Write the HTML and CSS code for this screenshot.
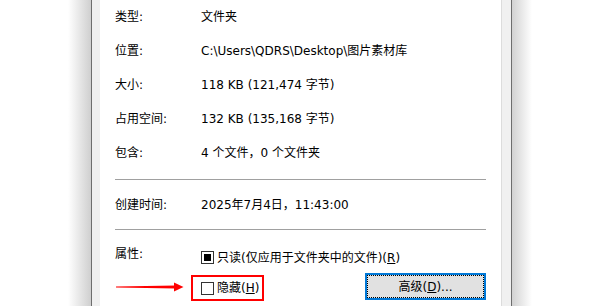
FILE: index.html
```html
<!DOCTYPE html>
<html lang="zh-CN">
<head>
<meta charset="utf-8">
<link rel="stylesheet" href="styles.css">
</head>
<body>
<div class="screen">
  <div class="shade-left"></div>
  <div class="edge"></div>
  <div class="frame frame-left"></div>
  <div class="panel">
    <div class="row"><div class="label">类型:</div><div class="value">文件夹</div></div>
    <div class="row"><div class="label">位置:</div><div class="value">C:\Users\QDRS\Desktop\图片素材库</div></div>
    <div class="row"><div class="label">大小:</div><div class="value">118 KB (121,474 字节)</div></div>
    <div class="row"><div class="label">占用空间:</div><div class="value">132 KB (135,168 字节)</div></div>
    <div class="row"><div class="label">包含:</div><div class="value">4 个文件，0 个文件夹</div></div>
    <div class="sep sep-first"></div>
    <div class="row row-tall"><div class="label">创建时间:</div><div class="value">2025年7月4日，11:43:00</div></div>
    <div class="sep"></div>
    <div class="attrs">
      <div class="label attr-label">属性:</div>
      <div class="check-row">
        <span class="box box-mixed"><span class="fill"></span></span><span class="check-text">只读(仅应用于文件夹中的文件)(<u>R</u>)</span>
      </div>
      <div class="arrow-cell">
        <svg class="arrow" width="68" height="10" viewBox="0 0 68 10">
          <polygon points="0,4.4 60,3.4 60,6.6 0,5.6" fill="#ff0000"/>
          <polygon points="58,0.6 67.5,5 58,9.4" fill="#ff0000"/>
        </svg>
      </div>
      <div class="bottom-row">
        <div class="highlight">
          <span class="box"></span><span class="check-text">隐藏(<u>H</u>)</span>
        </div>
        <button class="btn">高级(<u>D</u>)...</button>
      </div>
    </div>
  </div>
  <div class="frame-border"></div>
  <div class="frame frame-right"></div>
  <div class="edge"></div>
  <div class="shade-right"></div>
</div>
</body>
</html>
```

FILE: styles.css
```css
html, body {
  margin: 0;
  padding: 0;
  background: #ffffff;
}
body {
  width: 600px;
  height: 306px;
  overflow: hidden;
  font-family: "DejaVu Sans", "Noto Sans CJK SC", sans-serif;
  font-size: 12px;
  color: #000;
}
.screen {
  display: flex;
  height: 306px;
}
.shade-left {
  width: 91px;
  flex: none;
  background: linear-gradient(to right, #ffffff 0, #ffffff 68px, #cfcfcf 91px);
}
.edge {
  width: 1px;
  flex: none;
  background: #6e6e6e;
}
.frame {
  flex: none;
  background: #f0f0f0;
}
.frame-left { width: 8px; }
.frame-right { width: 9px; }
.frame-border {
  width: 1px;
  flex: none;
  background: #dcdcdc;
}
.shade-right {
  flex: 1;
  background: linear-gradient(to right, #d2d2d2 0, #ffffff 20px);
}
.panel {
  width: 401px;
  flex: none;
  background: #fff;
  padding: 0 15px;
  box-sizing: border-box;
}
.row {
  display: flex;
  align-items: center;
  height: 34px;
  line-height: 16px;
}
.row-tall { height: 49px; }
.label {
  width: 86px;
  flex: none;
  line-height: 16px;
}
.value { white-space: nowrap; }
.sep {
  height: 1px;
  background: #a0a0a0;
}
.sep-first { margin-top: 9px; }
.attrs {
  display: grid;
  grid-template-columns: 86px 1fr;
  grid-template-rows: 36px auto;
}
.attr-label {
  padding-top: 16px;
}
.check-row {
  display: flex;
  align-items: center;
  padding-top: 21px;
  height: 13px;
}
.box {
  width: 13px;
  height: 13px;
  box-sizing: border-box;
  border: 1px solid #333;
  background: #fff;
  padding: 2px;
  margin-right: 3px;
  flex: none;
  display: inline-block;
}
.fill {
  display: block;
  width: 7px;
  height: 7px;
  background: #000;
}
.check-text {
  line-height: 16px;
  white-space: nowrap;
}
u {
  text-decoration: underline;
  text-underline-offset: 1px;
}
.arrow-cell {
  display: flex;
  align-items: center;
  padding-left: 1px;
  padding-top: 7px;
}
.arrow { display: block; }
.bottom-row {
  display: flex;
  justify-content: space-between;
  align-items: flex-start;
  padding-top: 7px;
}
.highlight {
  display: flex;
  align-items: center;
  margin-top: 2px;
  margin-left: -10px;
  height: 26px;
  width: 73px;
  box-sizing: border-box;
  border: 2px solid #ff0000;
  padding-left: 8px;
}
.btn {
  width: 121px;
  height: 27px;
  margin: 0;
  padding: 0;
  box-sizing: border-box;
  border: 2px solid #0078d7;
  background: #e1e1e1;
  outline: 1px dotted #000;
  outline-offset: -3px;
  font-family: inherit;
  font-size: 12px;
  color: #000;
  line-height: 16px;
}
```
